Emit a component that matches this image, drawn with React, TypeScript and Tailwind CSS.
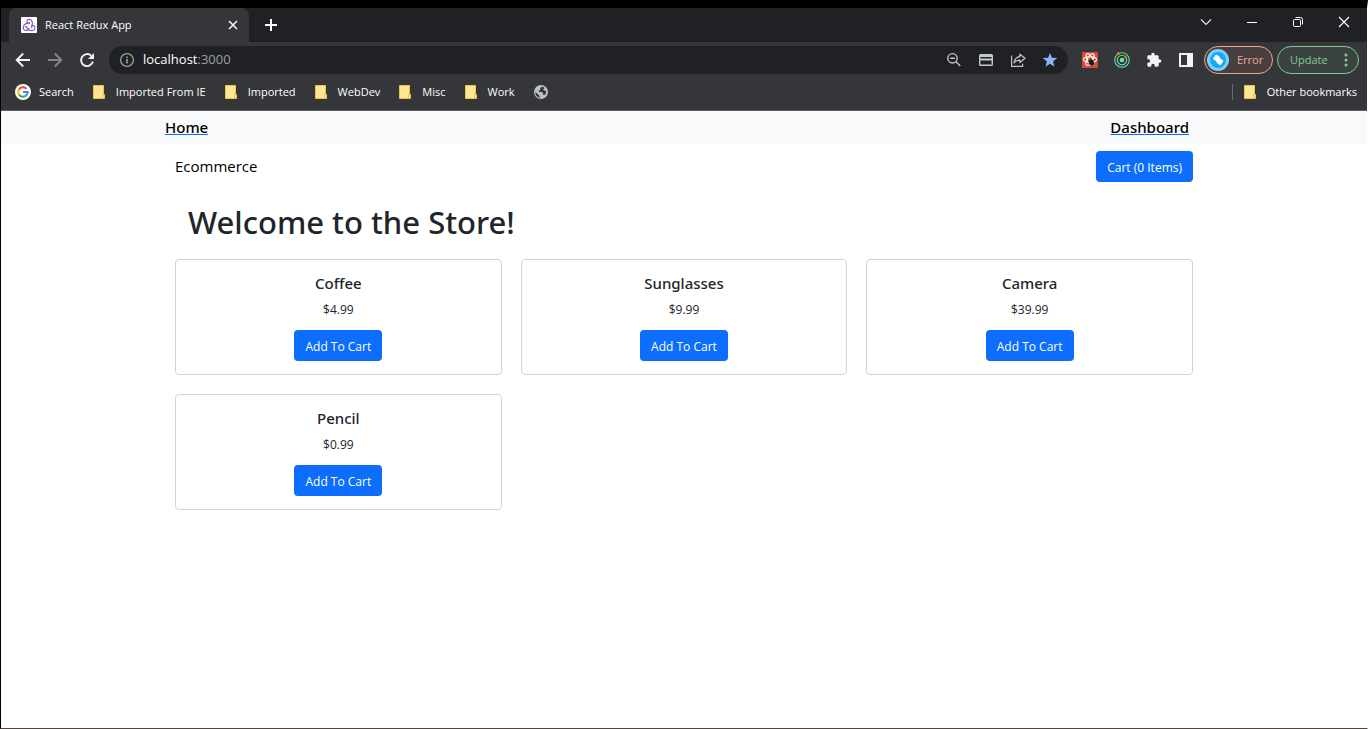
import type { ReactNode } from "react";

const products = [
  { name: "Coffee", price: "$4.99" },
  { name: "Sunglasses", price: "$9.99" },
  { name: "Camera", price: "$39.99" },
  { name: "Pencil", price: "$0.99" },
];

const folders = ["Imported From IE", "Imported", "WebDev", "Misc", "Work"];

function ReduxIcon() {
  return (
    <svg viewBox="0 0 16 16" className="size-4" aria-hidden="true">
      <rect width="16" height="16" rx="1" fill="#fff" />
      <g fill="none" stroke="#8560c6" strokeWidth="1.200" strokeLinecap="round">
        <path d="M10.700 9.900c1-2.300.9-5.300-.8-6.900-1.300-1.100-3.100-.7-3.800.8-.4 1.200 0 2.300.9 3" />
        <path d="M5.200 9.600c1.200 2.300 3.900 4.100 6.400 3.900 1.900-.3 2.900-2.200 2.100-3.900-.6-1.100-1.800-1.500-3-1.200" />
        <path d="M8.300 5.900C5.600 6 3 7.400 2.300 9.700c-.5 2 .8 3.700 2.700 3.800 1.500 0 2.500-.8 2.800-2.200" />
      </g>
      <g fill="#8560c6">
        <circle cx="8.300" cy="5.900" r=".9" />
        <circle cx="5.200" cy="9.600" r=".9" />
        <circle cx="10.600" cy="10.300" r=".9" />
      </g>
    </svg>
  );
}

function GoogleIcon() {
  return (
    <svg viewBox="0 0 16 16" className="size-4" aria-hidden="true">
      <circle cx="8" cy="8" r="8" fill="#fff" />
      <g fill="none" strokeWidth="2">
        <path d="M4 5.500A4.700 4.700 0 0 1 11.500 4.800" stroke="#ea4335" />
        <path d="M4 5.500A4.700 4.700 0 0 0 4 10.500" stroke="#fbbc05" />
        <path d="M4 10.500A4.700 4.700 0 0 0 11 11.600" stroke="#34a853" />
        <path d="M8 8h4.700A4.700 4.700 0 0 1 11 11.600" stroke="#4285f4" />
      </g>
    </svg>
  );
}

function FolderIcon() {
  return (
    <svg viewBox="0 0 16 16" className="size-4" aria-hidden="true">
      <path d="M1.500 1.500h10v9h1v4h-11z" fill="#ffe694" stroke="#e8c34a" />
      <path d="M10.500 14.500v-4h1" fill="none" stroke="#e8c34a" />
    </svg>
  );
}

function GlobeIcon() {
  return (
    <svg viewBox="0 0 16 16" className="size-4" aria-hidden="true">
      <circle cx="8" cy="8" r="7" fill="#bdc1c6" />
      <path
        d="M9 2.500 7.300 4.200v1.600L5.800 6.600l.4 1.400h3l.9 1.500v1.200l1 .3 1.800-1.200V6.500l-1.700.3-1-1.200 1.500-1.800zM2.400 8l3.700 3.300v1l1.700 1.500-2.800-.6L2.700 11z"
        fill="#35363a"
      />
    </svg>
  );
}

function BackIcon({ flip = false }: { flip?: boolean }) {
  return (
    <svg viewBox="0 0 16 16" className={flip ? "size-4 rotate-180 text-[#85868a]" : "size-4 text-[#f1f3f4]"} aria-hidden="true">
      <path d="M15 8H2M8.200 1.500 1.700 8l6.500 6.500" fill="none" stroke="currentColor" strokeWidth="1.900" />
    </svg>
  );
}

function ReloadIcon() {
  return (
    <svg viewBox="0 0 16 16" className="size-4" aria-hidden="true">
      <path d="M13.900 9.500A6 6 0 1 1 12.300 3.800" fill="none" stroke="#f1f3f4" strokeWidth="1.900" />
      <path d="M15 1v6H9z" fill="#f1f3f4" />
    </svg>
  );
}

function InfoIcon() {
  return (
    <svg viewBox="0 0 16 16" className="size-4" aria-hidden="true">
      <circle cx="8" cy="8" r="6.400" fill="none" stroke="#9aa0a6" strokeWidth="1.300" />
      <path d="M7.200 7h1.600v4.500H7.200zM7.200 4.500h1.600v1.500H7.200z" fill="#9aa0a6" />
    </svg>
  );
}

function ZoomOutIcon() {
  return (
    <svg viewBox="0 0 16 16" className="size-4" aria-hidden="true">
      <g fill="none" stroke="#c4c7c9" strokeWidth="1.400">
        <circle cx="6.500" cy="6.300" r="4.700" />
        <path d="M4.200 6.300h4.600M9.900 9.700l4.400 4.400" />
      </g>
    </svg>
  );
}

function CardIcon() {
  return (
    <svg viewBox="0 0 16 16" className="size-4" aria-hidden="true">
      <rect x="1.700" y="2.700" width="12.600" height="10.600" rx=".8" fill="none" stroke="#c4c7c9" strokeWidth="1.400" />
      <path d="M2 4h12M2 7.500h12" stroke="#c4c7c9" strokeWidth="2" />
    </svg>
  );
}

function ShareIcon() {
  return (
    <svg viewBox="0 0 16 16" className="size-4" aria-hidden="true">
      <g fill="none" stroke="#c4c7c9" strokeWidth="1.200">
        <path d="M1.600 3.500v10.900h11v-2.600" />
        <path d="M9.800 2.200 15 6.300l-5.200 4.200V8.200C7.300 8.200 5.300 9 4 11c.4-3.500 2.400-5.900 5.800-6.400z" strokeLinejoin="round" />
      </g>
    </svg>
  );
}

function StarIcon() {
  return (
    <svg viewBox="0 0 16 16" className="size-4" aria-hidden="true">
      <path d="m8 .9 1.900 4.900 5.300.3-4.100 3.400 1.400 5.200L8 11.800l-4.500 2.900 1.400-5.200L.8 6.100l5.300-.3z" fill="#8ab4f8" />
    </svg>
  );
}

function ReactBugIcon() {
  return (
    <svg viewBox="0 0 16 16" className="size-4" aria-hidden="true">
      <rect width="16" height="16" fill="#d9483b" />
      <g fill="none" stroke="#fff" strokeWidth="1.100">
        <ellipse cx="8" cy="7.500" rx="6.500" ry="2.700" />
        <ellipse cx="8" cy="7.500" rx="6.500" ry="2.700" transform="rotate(60 8 7.500)" />
        <ellipse cx="8" cy="7.500" rx="6.500" ry="2.700" transform="rotate(120 8 7.500)" />
      </g>
      <ellipse cx="9.500" cy="10.500" rx="2.500" ry="3.200" transform="rotate(-30 9.500 10.500)" fill="#1d1d1d" />
      <path d="m6.200 9.300 6.500 3M6.500 12.500l5.800-4.500M8.500 7l2 7" stroke="#1d1d1d" strokeWidth=".8" />
    </svg>
  );
}

function RingsIcon() {
  return (
    <svg viewBox="0 0 16 16" className="size-4" aria-hidden="true">
      <defs>
        <linearGradient id="rings" x1="0" y1="0" x2="0" y2="1">
          <stop offset="0" stopColor="#4fdc5f" />
          <stop offset="1" stopColor="#6fe0dc" />
        </linearGradient>
      </defs>
      <g fill="none" stroke="url(#rings)" strokeWidth="1.100">
        <circle cx="8" cy="8" r="7.300" />
        <circle cx="8" cy="8" r="4.700" />
      </g>
      <circle cx="8" cy="8" r="2.300" fill="#5fe6a4" />
      <circle cx="4.300" cy="1.600" r="1.500" fill="#f4792b" />
      <circle cx="11.500" cy="5" r="1.500" fill="#f0562b" />
    </svg>
  );
}

function PuzzleIcon() {
  return (
    <svg viewBox="0 0 24 24" className="size-4" aria-hidden="true">
      <path
        d="M20.500 11H19V7c0-1.100-.9-2-2-2h-4V3.500a2.500 2.500 0 0 0-5 0V5H4c-1.100 0-2 .9-2 2v3.800h1.500a2.700 2.700 0 0 1 0 5.400H2V20c0 1.100.9 2 2 2h3.800v-1.500a2.700 2.700 0 0 1 5.400 0V22H17c1.100 0 2-.9 2-2v-4h1.500a2.500 2.500 0 0 0 0-5z"
        fill="#f1f3f4"
      />
    </svg>
  );
}

function SidePanelIcon() {
  return (
    <svg viewBox="0 0 16 16" className="size-4" aria-hidden="true">
      <path d="M1 1h14v14H1zM3 3v10h6V3z" fill="#f1f3f4" fillRule="evenodd" />
    </svg>
  );
}

function AvatarIcon() {
  return (
    <svg viewBox="0 0 22 22" className="size-[22px]" aria-hidden="true">
      <circle cx="11" cy="11" r="11" fill="#7dd0f9" />
      <circle cx="11" cy="11" r="8" fill="#16a9f5" />
      <g fill="#fff">
        <rect x="6.800" y="6.300" width="5.600" height="5.600" rx="1.400" transform="rotate(35 9.600 9.100)" />
        <rect x="10" y="9.800" width="5.600" height="5.600" rx="1.400" transform="rotate(35 12.800 12.600)" />
      </g>
    </svg>
  );
}

function IconButton({ label, children }: { label: string; children: ReactNode }) {
  return (
    <button type="button" aria-label={label} className="flex size-8 shrink-0 items-center justify-center">
      {children}
    </button>
  );
}

function TabStrip() {
  return (
    <div className="flex h-[34px] items-center bg-[#202124] pl-2">
      <div className="flex h-full w-60 items-center gap-2 rounded-t-lg bg-[#35363a] pl-3 pr-2">
        <ReduxIcon />
        <span className="flex-1 text-[11px] text-white">React Redux App</span>
        <button type="button" aria-label="Close tab" className="flex size-4 items-center justify-center">
          <svg viewBox="0 0 16 16" className="size-4" aria-hidden="true">
            <path d="m4 4 8 8M12 4l-8 8" stroke="#f1f3f4" strokeWidth="1.600" />
          </svg>
        </button>
      </div>
      <button type="button" aria-label="New tab" className="ml-3.5 flex size-4 items-center justify-center">
        <svg viewBox="0 0 16 16" className="size-4" aria-hidden="true">
          <path d="M8 2v12M2 8h12" stroke="#fff" strokeWidth="2" />
        </svg>
      </button>
      <div className="ml-auto flex h-full items-start pt-1.5">
        <button type="button" aria-label="Search tabs" className="flex h-4 w-[46px] items-center justify-center">
          <svg viewBox="0 0 16 16" className="size-4" aria-hidden="true">
            <path d="m3 5.500 5 5 5-5" fill="none" stroke="#e8eaed" strokeWidth="1.100" />
          </svg>
        </button>
        <button type="button" aria-label="Minimize" className="flex h-4 w-[46px] items-center justify-center">
          <svg viewBox="0 0 16 16" className="size-4" aria-hidden="true">
            <path d="M3 8.500h10" stroke="#fff" />
          </svg>
        </button>
        <button type="button" aria-label="Restore" className="flex h-4 w-[46px] items-center justify-center">
          <svg viewBox="0 0 16 16" className="size-4" aria-hidden="true">
            <rect x="3.500" y="5.500" width="7" height="7" rx="1" fill="none" stroke="#fff" />
            <path d="M5.500 3.500h5a2 2 0 0 1 2 2v5" fill="none" stroke="#fff" />
          </svg>
        </button>
        <button type="button" aria-label="Close window" className="flex h-4 w-[46px] items-center justify-center">
          <svg viewBox="0 0 16 16" className="size-4" aria-hidden="true">
            <path d="m3 3 10 10M13 3 3 13" stroke="#fff" strokeWidth="1.200" />
          </svg>
        </button>
      </div>
    </div>
  );
}

function Toolbar() {
  return (
    <div className="flex h-9 items-center bg-[#35363a] pl-1.5 pr-2">
      <IconButton label="Back"><BackIcon /></IconButton>
      <IconButton label="Forward"><BackIcon flip /></IconButton>
      <IconButton label="Reload"><ReloadIcon /></IconButton>
      <div className="ml-1.5 flex h-7 flex-1 items-center rounded-full bg-[#202124] pl-2.5 pr-0.5">
        <InfoIcon />
        <span className="ml-2 flex-1 text-[13px] text-white">
          localhost<span className="text-[#9aa0a6]">:3000</span>
        </span>
        <IconButton label="Zoom"><ZoomOutIcon /></IconButton>
        <IconButton label="Payment methods"><CardIcon /></IconButton>
        <IconButton label="Share"><ShareIcon /></IconButton>
        <IconButton label="Bookmark this tab"><StarIcon /></IconButton>
      </div>
      <div className="ml-1.5 flex">
        <IconButton label="React developer tools"><ReactBugIcon /></IconButton>
        <IconButton label="Profiler"><RingsIcon /></IconButton>
        <IconButton label="Extensions"><PuzzleIcon /></IconButton>
        <IconButton label="Side panel"><SidePanelIcon /></IconButton>
      </div>
      <button type="button" className="ml-0.5 flex h-7 w-[69px] items-center gap-2 rounded-full border border-[#f0a49c] bg-[#48403f] pl-0.5 text-[11px] text-[#f0a49c]">
        <AvatarIcon />
        Error
      </button>
      <button type="button" className="ml-1 flex h-7 w-[82px] items-center justify-between rounded-full border border-[#81c995] bg-[#3b4341] pl-3 pr-2.5 text-[11px] text-[#81c995]">
        Update
        <svg viewBox="0 0 4 16" className="h-4 w-1" aria-hidden="true">
          <g fill="#81c995">
            <circle cx="2" cy="3" r="1.500" />
            <circle cx="2" cy="8" r="1.500" />
            <circle cx="2" cy="13" r="1.500" />
          </g>
        </svg>
      </button>
    </div>
  );
}

function BookmarksBar() {
  return (
    <div className="flex h-[33px] items-center gap-[18px] border-b border-[#5f6063] bg-[#35363a] pb-1 pl-3.5 pr-2.5 text-[11px] text-white">
      <a href="#search" className="flex items-center gap-2"><GoogleIcon />Search</a>
      {folders.map((name) => (
        <a key={name} href="#folder" className="flex items-center gap-2 whitespace-nowrap"><FolderIcon />{name}</a>
      ))}
      <a href="#site" aria-label="Site"><GlobeIcon /></a>
      <div className="ml-auto flex items-center gap-2.5">
        <span className="h-4 w-px bg-[#6b6c70]" />
        <a href="#other" className="flex items-center gap-2 whitespace-nowrap"><FolderIcon />Other bookmarks</a>
      </div>
    </div>
  );
}

function Product({ name, price }: { name: string; price: string }) {
  return (
    <li className="flex flex-col items-center rounded border border-[#d3d3d4] py-[13px]">
      <h2 className="font-['Noto_Sans',sans-serif] text-[15px] font-medium leading-5">{name}</h2>
      <p className="mt-[7px] text-[12px] leading-5">{price}</p>
      <button type="button" className="mt-2.5 h-[31px] rounded bg-[#0d6efd] px-[11px] pt-0.5 text-[12px] text-white">
        Add To Cart
      </button>
    </li>
  );
}

function Store() {
  return (
    <div className="flex-1 bg-white text-[#212529]">
      <nav className="bg-[#f8f9fa]">
        <div className="mx-auto flex h-[33px] max-w-[1038px] items-center justify-between pr-3.5 font-['Noto_Sans',sans-serif] text-[15px] font-medium text-black">
          <a href="#home" className="underline decoration-[#0d6efd]">Home</a>
          <a href="#dashboard" className="underline decoration-[#0d6efd]">Dashboard</a>
        </div>
      </nav>
      <main className="mx-auto max-w-[1038px] px-2.5">
        <div className="flex items-center justify-between py-[7px]">
          <span className="text-[15px] text-black">Ecommerce</span>
          <button type="button" className="h-[31px] rounded bg-[#0d6efd] px-[11px] pt-0.5 text-[12px] text-white">
            Cart (0 Items)
          </button>
        </div>
        <h1 className="mb-[18px] mt-3.5 pl-[13px] font-['Noto_Sans',sans-serif] text-[31px] font-medium leading-[38px]">
          Welcome to the Store!
        </h1>
        <ul className="grid grid-cols-3 gap-[19px]">
          {products.map((product) => (
            <Product key={product.name} name={product.name} price={product.price} />
          ))}
        </ul>
      </main>
    </div>
  );
}

export default function App() {
  return (
    <div className="flex min-h-screen flex-col border-x border-b border-t-8 border-b-[#4d463c] border-l-black border-r-white border-t-black bg-[#35363a] font-['Open_Sans','Noto_Sans',sans-serif]">
      <header>
        <TabStrip />
        <Toolbar />
        <BookmarksBar />
      </header>
      <Store />
    </div>
  );
}
